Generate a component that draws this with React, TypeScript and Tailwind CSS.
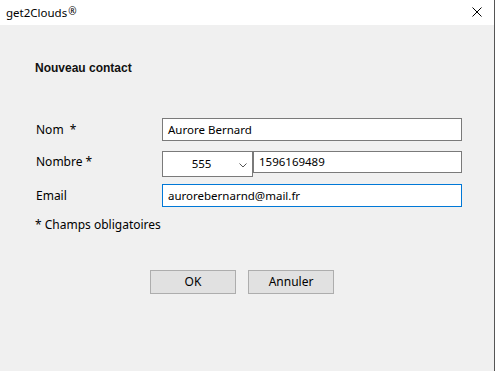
import React from 'react';

const font = { fontFamily: '"Noto Sans", "Open Sans", sans-serif' };

const Field = ({ value, focused }: { value: string; focused?: boolean }) => (
    <div
        className={`h-[23px] flex-1 bg-white border flex items-center pl-[5px] text-[11.5px] text-black ${focused ? 'border-[#0078d7]' : 'border-[#7a7a7a]'}`}
    >
        {value}
    </div>
);

export default function App() {
    return (
        <div className="w-[495px] h-[371px] bg-[#f0f0f0] border-r border-[#555] flex flex-col text-[12px] text-black" style={font}>
            <div className="h-[25px] bg-white flex items-center justify-between pl-[6px] pr-[12px]">
                <span className="text-[11.5px] leading-none">get2Clouds<span className="align-top text-[10px] relative -top-[1px] ml-[1px]">®</span></span>
                <svg width="10" height="10" viewBox="0 0 10 10" className="mb-[1px]">
                    <path d="M0.5 0.5 L9.5 9.5 M9.5 0.5 L0.5 9.5" stroke="#000" strokeWidth="1" />
                </svg>
            </div>

            <div className="pl-[35px] pr-[32px] flex flex-col">
                <h1 className="mt-[36px] h-[14px] leading-[14px] font-bold text-[12px] text-[#111]" style={{ fontFamily: '"Liberation Sans", Arial, sans-serif' }}>
                    Nouveau contact
                </h1>

                <div className="mt-[43px] flex items-center">
                    <span className="w-[127px] pl-[1px]">Nom&nbsp; *</span>
                    <Field value="Aurore Bernard" />
                </div>

                <div className="mt-[10px] flex items-start">
                    <span className="w-[127px] pl-[1px] h-[22px] flex items-center">Nombre *</span>
                    <div className="w-[91px] h-[26px] bg-white border border-[#7a7a7a] flex items-center relative text-[11.5px]">
                        <span className="flex-1 text-center pr-[12px]">555</span>
                        <svg width="8" height="5" viewBox="0 0 8 5" className="absolute right-[5px] top-[11px]">
                            <path d="M0.5 0.5 L4 4 L7.5 0.5" stroke="#555" strokeWidth="1" fill="none" />
                        </svg>
                    </div>
                    <div className="h-[22px] flex-1 bg-white border border-[#7a7a7a] flex items-center pl-[5px] text-[11.5px]">1596169489</div>
                </div>

                <div className="mt-[7px] flex items-center">
                    <span className="w-[127px] pl-[1px]">Email</span>
                    <Field value="aurorebernarnd@mail.fr" focused />
                </div>

                <div className="mt-[10px] h-[16px] flex items-center">* Champs obligatoires</div>

                <div className="mt-[37px] flex gap-[12px] pl-[115px]">
                    <button className="w-[86px] h-[24px] bg-[#e1e1e1] border border-[#adadad] text-[12px]">OK</button>
                    <button className="w-[86px] h-[24px] bg-[#e1e1e1] border border-[#adadad] text-[12px]">Annuler</button>
                </div>
            </div>
        </div>
    );
}
